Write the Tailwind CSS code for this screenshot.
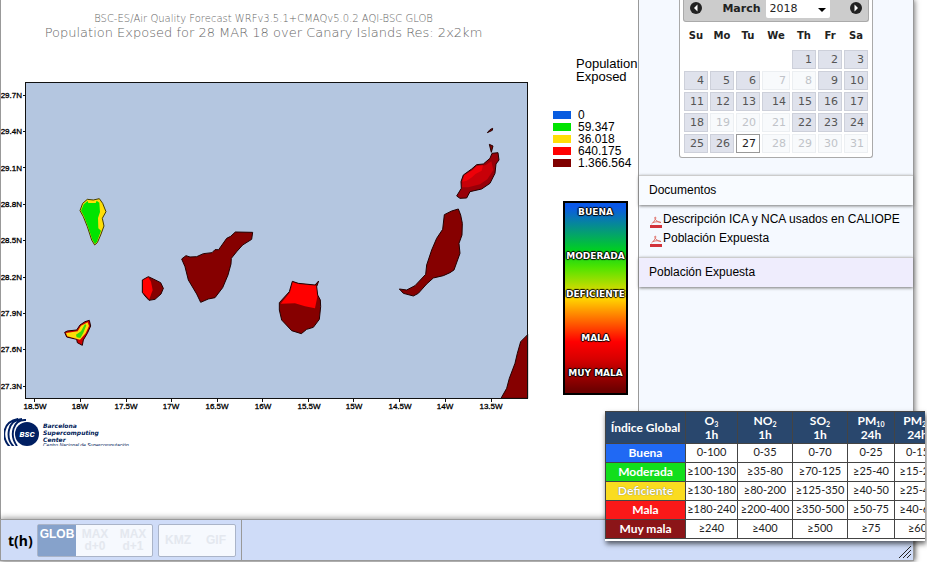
<!DOCTYPE html>
<html lang="es">
<head>
<meta charset="utf-8">
<title>CALIOPE - Población Expuesta</title>
<script src="https://cdn.jsdelivr.net/npm/@tailwindcss/browser@4"></script>
</head>
<body class="bg-white font-['Liberation_Sans',Arial,sans-serif] text-black">
<div class="relative flex min-h-screen flex-col overflow-hidden pr-[13px] pb-px">
  <div class="flex flex-1 flex-col shadow-[1px_0_5px_rgba(0,0,0,0.5)]">
  <div class="flex flex-1">
    <main class="flex min-w-0 flex-1 border-l border-[#999] bg-white">
      <section class="flex min-w-0 flex-1 flex-col">
        <header class="h-20 pt-3 pr-1 text-center font-['DejaVu_Sans',sans-serif] font-extralight text-[#666]">
          <h1 class="text-[10px] leading-[14px]">BSC-ES/Air Quality Forecast WRFv3.5.1+CMAQv5.0.2 AQI-BSC GLOB</h1>
          <h2 class="text-[13px] leading-[14px]">Population Exposed for 28 MAR 18 over Canary Islands Res: 2x2km</h2>
        </header>
        <svg class="h-auto w-full" viewBox="1 80 529 332" role="img" aria-label="Canary Islands map">
          <rect x="25.500" y="82.500" width="502" height="316" fill="#b4c6e0"/>
          <g stroke="#200" stroke-width="3" stroke-linejoin="round" fill="#860000">
            <g transform="translate(0 190) scale(.33333)">
              <path fill="#ffde08" stroke="#443c00" d="M240 62L248 40L262 28L280 30L298 26L308 40L318 65L307 85L312 108L302 135L292 158L284 165L275 150L262 110L250 80Z"/>
              <path fill="#00e400" stroke="none" d="M243 62L251 43L263 33L265 39L287 39L290 32L298 38L300 66L294 84L295 115L303 122L291 155L285 162L277 149L264 110L252 79Z"/>
              <path d="M545 207L558 197L570 201L590 200L610 191L636 188L645 179L656 179L680 145L692 139L706 126L758 127L755 148L728 165L710 185L694 205L693 222L684 255L668 293L645 323L625 327L602 337L590 312L565 270L555 230Z"/>
              <path d="M427 270L445 260L460 267L482 278L490 295L483 312L465 328L447 331L435 318L427 307Z"/>
              <path fill="#f00" stroke="none" d="M429 271L445 262L453 275L458 300L448 328L429 307Z"/>
              <path fill="#c00" d="M194 427L202 423L230 420L240 405L255 395L268 391L272 408L262 430L250 450L247 466L232 458L230 448L200 441Z"/>
              <path fill="#ffde08" stroke="none" d="M198 429L233 424L243 407L263 397L267 408L257 430L240 449L202 439Z"/>
              <path fill="#3cd80a" stroke="none" d="M228 434L243 424L255 402L259 406L250 428L241 444L230 442Z"/>
            </g>
            <g transform="translate(260 190) scale(.33333)">
              <path d="M97 274L115 280L165 285L176 273L170 290L173 315L181 330L182 350L178 388L160 412L140 418L124 431L95 422L65 390L58 360L58 338L88 305Z"/>
              <path fill="#f00" stroke="none" d="M98 277L115 282L168 287L172 320L165 355L135 349L105 340L62 341L90 307Z"/>
              <path d="M553 74L575 63L595 57L602 75L607 100L606 135L597 160L600 190L582 240L570 248L550 257L520 264L500 282L475 310L460 318L430 310L418 297L440 300L465 287L497 253L500 225L515 180L530 145L548 118Z"/>
              <path d="M723 625L740 595L748 565L765 520L772 490L782 455L803 434L803 625Z"/>
            </g>
            <g transform="translate(300 0) scale(.33333)">
              <path fill="#980008" d="M470 588L484 565L483 545L490 525L515 507L530 494L550 492L570 475L576 460L594 458L597 480L588 492L585 520L570 550L545 567L510 575L500 594L480 595Z"/>
              <path fill="#c80008" stroke="none" d="M486 562L487 540L493 526L517 511L531 498L556 496L574 484L580 510L562 538L540 553L505 562Z"/>
              <path fill="#ee0008" stroke="none" d="M487 545L493 526L517 511L531 498L549 496L545 512L526 522L516 532L500 542Z"/>
              <path d="M562 398L570 389L578 385L577 391ZM568 433L579 438L574 457Z"/>
            </g>
          </g>
          <rect x="25.500" y="82.500" width="502" height="316" fill="none" stroke="#111"/>
          <path stroke="#111" d="M23 95.500h2M23 131.500h2M23 167.500h2M23 204.500h2M23 240.500h2M23 277.500h2M23 313.500h2M23 349.500h2M23 386.500h2M34.500 399v3M80.500 399v3M126.500 399v3M171.500 399v3M217.500 399v3M262.500 399v3M308.500 399v3M353.500 399v3M399.500 399v3M445.500 399v3M491.500 399v3"/>
          <g class="font-['Liberation_Sans',sans-serif] text-[8px]" stroke="#000" stroke-width=".3" text-anchor="end">
            <text x="22" y="98">29.7N</text><text x="22" y="134">29.4N</text><text x="22" y="171">29.1N</text>
            <text x="22" y="207">28.8N</text><text x="22" y="243">28.5N</text><text x="22" y="280">28.2N</text>
            <text x="22" y="316">27.9N</text><text x="22" y="352">27.6N</text><text x="22" y="389">27.3N</text>
          </g>
          <g class="font-['Liberation_Sans',sans-serif] text-[8px]" stroke="#000" stroke-width=".3" text-anchor="middle">
            <text x="35" y="409">18.5W</text><text x="80" y="409">18W</text><text x="126" y="409">17.5W</text>
            <text x="171" y="409">17W</text><text x="217" y="409">16.5W</text><text x="263" y="409">16W</text>
            <text x="309" y="409">15.5W</text><text x="354" y="409">15W</text><text x="400" y="409">14.5W</text>
            <text x="445" y="409">14W</text><text x="491" y="409">13.5W</text>
          </g>
        </svg>
        <div class="mt-[6px] flex h-7 gap-1 overflow-hidden pl-[3px] text-[#001a57]">
          <svg class="h-[35px] w-[35px] shrink-0" viewBox="0 0 35 35" role="img" aria-label="BSC">
            <circle cx="23" cy="16" r="12" fill="#001f62"/>
            <path d="M22 2C9 1 5 17 13 28M18 1C3 2 1 20 10 29M14 1C-2 4-3 20 6 29" fill="none" stroke="#001f62" stroke-width="1.900"/>
            <text x="23" y="19" text-anchor="middle" fill="#fff" class="font-['Roboto',sans-serif] text-[8px] font-black italic">BSC</text>
          </svg>
          <div class="pt-1 font-['DejaVu_Sans',sans-serif] text-[6px] leading-[7px] font-bold whitespace-nowrap italic">
            <p>Barcelona</p><p>Supercomputing</p><p>Center</p>
            <p class="font-['Liberation_Sans',sans-serif] text-[5px] leading-[5px] font-normal">Centro Nacional de Supercomputación</p>
          </div>
        </div>
        <div class="flex-1"></div>
      </section>

      <aside class="flex w-[108px] shrink-0 flex-col pt-[57px]">
        <h3 class="pl-[46px] text-[13px] leading-[13px]">Population Exposed</h3>
        <ul class="mt-[26px] pl-[23px] text-[12px] leading-3">
          <li class="flex items-center gap-[7px]"><span class="h-2 w-[18px] bg-[#085ce0]"></span>0</li>
          <li class="flex items-center gap-[7px]"><span class="h-2 w-[18px] bg-[#00e400]"></span>59.347</li>
          <li class="flex items-center gap-[7px]"><span class="h-2 w-[18px] bg-[#ffde08]"></span>36.018</li>
          <li class="flex items-center gap-[7px]"><span class="h-2 w-[18px] bg-[#f00]"></span>640.175</li>
          <li class="flex items-center gap-[7px]"><span class="h-2 w-[18px] bg-[#800000]"></span>1.366.564</li>
        </ul>
        <div class="mt-8 ml-[33px] h-[194px] w-[65px] border-2 border-black bg-[linear-gradient(#0a58e8_2%,#00d020_25%,#50e400_34%,#ffd800_50%,#ff0000_73%,#d80000_82%,#700000_98%)] font-['DejaVu_Sans',sans-serif] text-[9px] leading-3 font-bold text-white [text-shadow:1px_0_1px_#000,-1px_0_1px_#000,0_1px_1px_#000,0_-1px_1px_#000]">
          <div class="flex flex-col items-center pt-[3px] whitespace-nowrap">
            <span>BUENA</span><span class="mt-8">MODERADA</span><span class="mt-[26px]">DEFICIENTE</span><span class="mt-8">MALA</span><span class="mt-[23px]">MUY MALA</span>
          </div>
        </div>
      </aside>
    </main>

    <aside class="w-[276px] shrink-0 border-x border-[#999] bg-[#f5f9ff]">
      <div class="mx-10 mb-[17px] rounded-b-[3px] border border-t-0 border-[#aaa] bg-white px-[3px] pb-[3px] font-['DejaVu_Sans',Verdana,sans-serif] text-[#222]">
        <div class="flex h-[22px] items-start justify-between rounded-b-[3px] border border-t-0 border-[#aaa] bg-[#ccc] px-[6px]">
          <button aria-label="Prev" class="mt-[2px]"><svg class="size-3" viewBox="0 0 12 12"><circle cx="6" cy="6" r="6" fill="#222"/><path d="M7.500 2.500L4 6l3.500 3.500z" fill="#fff"/></svg></button>
          <div class="flex text-[11px]">
            <label for="year" class="mr-[5px] leading-[18px] font-bold">March</label>
            <div class="relative">
              <select id="year" class="h-[18px] w-16 appearance-none rounded-b-[2px] bg-white pl-1 leading-[18px]"><option>2018</option></select>
              <svg class="pointer-events-none absolute top-2 right-1 h-1 w-2" viewBox="0 0 8 4"><path d="M0 0h8L4 4z"/></svg>
            </div>
          </div>
          <button aria-label="Next" class="mt-[2px]"><svg class="size-3" viewBox="0 0 12 12"><circle cx="6" cy="6" r="6" fill="#222"/><path d="M4.500 2.500L8 6L4.500 9.500z" fill="#fff"/></svg></button>
        </div>
        <table class="w-full table-fixed border-collapse text-right text-[11px] [&_a]:block [&_a]:h-[19px] [&_a]:border [&_a]:border-[#cdd0da] [&_a]:bg-[#dfe2ec] [&_a]:pr-[3px] [&_a]:leading-[17px] [&_a]:text-[#555] [&_span]:block [&_span]:h-[19px] [&_span]:border [&_span]:border-[#eceff2] [&_span]:bg-[#f8fafc] [&_span]:pr-[3px] [&_span]:leading-[17px] [&_span]:text-[#c0c3c8] [&_td]:p-px">
          <colgroup><col><col><col><col class="w-[30px]"><col><col><col></colgroup>
          <thead><tr class="h-[27px] text-center text-[10px] [&_th]:font-bold"><th>Su</th><th>Mo</th><th>Tu</th><th>We</th><th>Th</th><th>Fr</th><th>Sa</th></tr></thead>
          <tbody>
            <tr><td colspan="4"></td><td><a href="#">1</a></td><td><a href="#">2</a></td><td><a href="#">3</a></td></tr>
            <tr><td><a href="#">4</a></td><td><a href="#">5</a></td><td><a href="#">6</a></td><td><span>7</span></td><td><span>8</span></td><td><a href="#">9</a></td><td><a href="#">10</a></td></tr>
            <tr><td><a href="#">11</a></td><td><a href="#">12</a></td><td><a href="#">13</a></td><td><a href="#">14</a></td><td><a href="#">15</a></td><td><a href="#">16</a></td><td><a href="#">17</a></td></tr>
            <tr><td><a href="#">18</a></td><td><span>19</span></td><td><span>20</span></td><td><span>21</span></td><td><a href="#">22</a></td><td><a href="#">23</a></td><td><a href="#">24</a></td></tr>
            <tr><td><a href="#">25</a></td><td><a href="#">26</a></td><td><a href="#" class="border-[#999]! bg-white! text-[#212121]!">27</a></td><td><span>28</span></td><td><span>29</span></td><td><span>30</span></td><td><span>31</span></td></tr>
          </tbody>
        </table>
      </div>
      <h3 class="h-[30px] border-t border-[#ccc] bg-[#f8fbff] pl-[10px] text-[12px] leading-[29px] shadow-[0_1px_3px_#777]">Documentos</h3>
      <ul class="h-[52px] pt-[5px] pl-[11px] text-[12px] leading-[19px] whitespace-nowrap">
        <li><a href="#" class="flex items-center gap-px"><svg class="mt-1 size-3 shrink-0" viewBox="0 0 12 12"><path d="M5 1c2 0 0 4-3.500 7M5 1c-1 2 2 5 6 5.500M3 6.500c3-1 5-1 8 0" fill="none" stroke="#e07068"/><path d="M0 9h12v3H0z" fill="#d2323a"/></svg>Descripción ICA y NCA usados en CALIOPE</a></li>
        <li><a href="#" class="flex items-center gap-px"><svg class="mt-1 size-3 shrink-0" viewBox="0 0 12 12"><path d="M5 1c2 0 0 4-3.500 7M5 1c-1 2 2 5 6 5.500M3 6.500c3-1 5-1 8 0" fill="none" stroke="#e07068"/><path d="M0 9h12v3H0z" fill="#d2323a"/></svg>Población Expuesta</a></li>
      </ul>
      <h3 class="h-[30px] border-t border-[#ccc] bg-[#efedfd] pl-[10px] text-[12px] leading-[29px] shadow-[0_1px_3px_#777]">Población Expuesta</h3>
    </aside>
  </div>

  <footer class="relative flex h-[42px] border border-[#999] bg-[#cfdcf8] shadow-[0_-1px_6px_rgba(0,0,0,0.4)]">
    <div class="flex items-center gap-[5px] border-r border-[#999] pr-[5px] pl-[7px]">
      <span class="w-6 font-['Noto_Sans',sans-serif] text-[14px] font-bold">t(h)</span>
      <div class="flex h-[33px] w-[116px] rounded-[2px] border border-[#aab4c8] bg-[#f6f9fe] text-center text-[12px] leading-3 font-bold text-[#e4e8ef]">
        <button class="flex-1 bg-[#86a2cb] pb-3 text-[#fff]">GLOB</button>
        <button class="flex-1">MAX<br>d+0</button>
        <button class="flex-1">MAX<br>d+1</button>
      </div>
      <div class="flex h-[33px] w-[78px] rounded-[2px] border border-[#aab4c8] bg-[#f6f9fe] text-[12px] font-bold text-[#e4e8ef]">
        <button class="flex-1">KMZ</button><button class="flex-1">GIF</button>
      </div>
    </div>
    <svg class="absolute right-[2px] bottom-[2px] size-3" viewBox="0 0 12 12"><path d="M0 12L12 0M4 12l8-8M8 12l4-4" stroke="#222"/></svg>
  </footer>
  </div>

  <div class="absolute right-[2px] bottom-[21px] w-80 overflow-hidden bg-white pb-[2px] shadow-[1px_3px_5px_rgba(0,0,0,0.6)]">
    <table class="w-[336px] table-fixed border-collapse text-center font-['Lato',sans-serif] text-[11px] leading-[14px] text-[#222] [&_tbody_th]:text-[12px] [&_tbody_th]:text-white [&_td]:border [&_td]:border-[#444] [&_td]:bg-white [&_td]:p-0 [&_td]:pb-[2px] [&_td]:whitespace-nowrap [&_th]:border [&_th]:border-[#444] [&_th]:p-0 [&_th]:font-bold [&_th]:whitespace-nowrap [&_sub]:bottom-[-2px] [&_sub]:text-[7px]">
      <colgroup><col class="w-[80px]"><col class="w-[52px]"><col class="w-[55px]"><col class="w-[55px]"><col class="w-[47px]"><col></colgroup>
      <thead><tr class="h-8 bg-[#29476d] text-[12px] text-white"><th>Índice Global</th><th>O<sub>3</sub><br>1h</th><th>NO<sub>2</sub><br>1h</th><th>SO<sub>2</sub><br>1h</th><th>PM<sub>10</sub><br>24h</th><th>PM<sub>2.5</sub><br>24h</th></tr></thead>
      <tbody class="[&_tr]:h-[19px]">
        <tr><th class="bg-[#2069f4]">Buena</th><td>0-100</td><td>0-35</td><td>0-70</td><td>0-25</td><td>0-15</td></tr>
        <tr><th class="bg-[#12de1c]">Moderada</th><td>≥100-130</td><td>≥35-80</td><td>≥70-125</td><td>≥25-40</td><td>≥15-25</td></tr>
        <tr><th class="bg-[#fadc20] [text-shadow:0_0_1px_#555]">Deficiente</th><td>≥130-180</td><td>≥80-200</td><td>≥125-350</td><td>≥40-50</td><td>≥25-40</td></tr>
        <tr><th class="bg-[#fa1818]">Mala</th><td>≥180-240</td><td>≥200-400</td><td>≥350-500</td><td>≥50-75</td><td>≥40-60</td></tr>
        <tr><th class="bg-[#8b1518]">Muy mala</th><td>≥240</td><td>≥400</td><td>≥500</td><td>≥75</td><td>≥60</td></tr>
      </tbody>
    </table>
  </div>
</div>
</body>
</html>
